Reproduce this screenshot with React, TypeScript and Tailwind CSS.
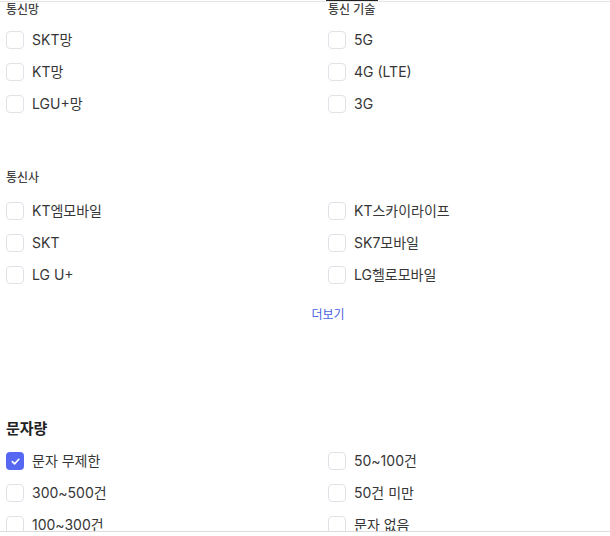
const FONT = { fontFamily: 'Inter, "Noto Sans CJK KR", sans-serif' };

type Item = { label: string; checked?: boolean };

function Box({ checked }: { checked?: boolean }) {
  if (checked) {
    return (
      <span className="flex h-[18px] w-[18px] shrink-0 items-center justify-center rounded-[4px] bg-[#5668f2]">
        <svg viewBox="0 0 12 12" className="h-[11px] w-[11px]" fill="none">
          <path d="M2.5 6.2 5 8.6 9.6 3.6" stroke="#fff" strokeWidth="1.8" strokeLinecap="round" strokeLinejoin="round" />
        </svg>
      </span>
    );
  }
  return <span className="h-[18px] w-[18px] shrink-0 rounded-[4px] border border-[#dfe2e7] bg-white" />;
}

function Row({ item }: { item: Item }) {
  return (
    <label className="flex h-8 items-center gap-2 text-sm text-[#363636]">
      <Box checked={item.checked} />
      <span>{item.label}</span>
    </label>
  );
}

function Column({ title, items }: { title?: string; items: Item[] }) {
  return (
    <div>
      {title !== undefined && <div className="h-4 text-xs leading-4 font-medium text-[#444]">{title}</div>}
      <div className="mt-[6px]">
        {items.map((it) => (
          <Row key={it.label} item={it} />
        ))}
      </div>
    </div>
  );
}

export default function App() {
  return (
    <div className="h-[536px] w-[610px] overflow-hidden bg-white" style={FONT}>
      <div className="h-[531px] overflow-hidden">
        <div className="h-px">
          <div className="ml-[326px] h-px w-[52px] bg-[#222]" />
        </div>
        <div className="border-t border-[#e4e4e4]" />

        <div className="grid grid-cols-[322px_1fr] pl-[6px]">
          <Column title="통신망" items={[{ label: "SKT망" }, { label: "KT망" }, { label: "LGU+망" }]} />
          <Column title="통신 기술" items={[{ label: "5G" }, { label: "4G (LTE)" }, { label: "3G" }]} />
        </div>

        <div className="mt-[50px] pl-[6px]">
          <div className="h-4 text-xs leading-4 font-medium text-[#444]">통신사</div>
          <div className="mt-[9px] grid grid-cols-[322px_1fr]">
            <div>
              <Row item={{ label: "KT엠모바일" }} />
              <Row item={{ label: "SKT" }} />
              <Row item={{ label: "LG U+" }} />
            </div>
            <div>
              <Row item={{ label: "KT스카이라이프" }} />
              <Row item={{ label: "SK7모바일" }} />
              <Row item={{ label: "LG헬로모바일" }} />
            </div>
          </div>
        </div>

        <div className="mt-[14px] flex h-5 justify-center pl-[46px]">
          <button className="text-xs leading-5 text-[#4a5fe6]">더보기</button>
        </div>

        <div className="mt-[92px] pl-[6px]">
          <div className="h-6 text-[15px] leading-6 font-bold text-[#222]">문자량</div>
          <div className="mt-[4px] grid grid-cols-[322px_1fr]">
            <div>
              <Row item={{ label: "문자 무제한", checked: true }} />
              <Row item={{ label: "300~500건" }} />
              <Row item={{ label: "100~300건" }} />
            </div>
            <div>
              <Row item={{ label: "50~100건" }} />
              <Row item={{ label: "50건 미만" }} />
              <Row item={{ label: "문자 없음" }} />
            </div>
          </div>
        </div>
      </div>
      <div className="border-t border-[#dcdcdc]" />
    </div>
  );
}
